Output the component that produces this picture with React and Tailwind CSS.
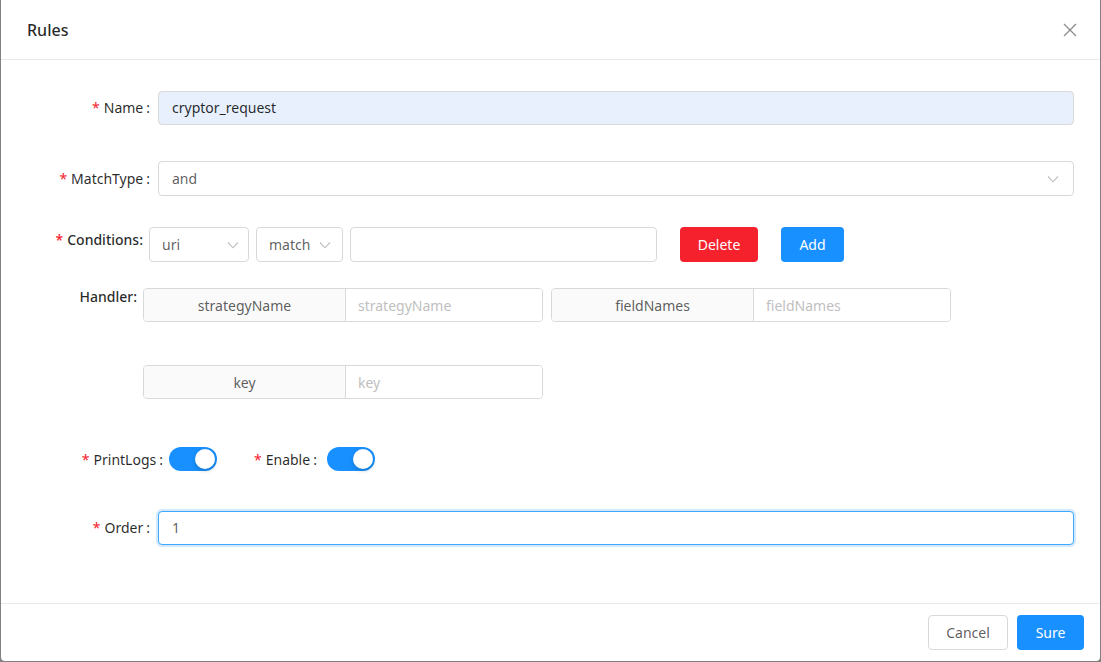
import React from "react";

const Chevron = ({ className = "" }) => (
  <svg width="12" height="12" viewBox="0 0 12 12" className={className} fill="none" stroke="#bfbfbf" strokeWidth="1.1">
    <polyline points="1,3.5 6,8.8 11,3.5" />
  </svg>
);

const Star = () => <span className="text-[#f5222d] mr-[4px] text-[14px]">*</span>;

const Label = ({ children, colon = true }) => (
  <div className="w-[150px] shrink-0 flex items-center justify-end text-[14px] text-[rgba(0,0,0,0.85)]">
    <Star />
    <span>{children}</span>
    {colon && <span className="ml-[3px] mr-[1px]">:</span>}
  </div>
);

const Switch = () => (
  <div className="w-[48px] h-[24px] rounded-full bg-[#1890ff] flex items-center justify-end pr-[2px]">
    <div className="w-[20px] h-[20px] rounded-full bg-white shadow-[0_2px_4px_rgba(0,35,11,0.2)]" />
  </div>
);

const AddonGroup = ({ name }) => (
  <div className="flex h-[34px] w-[400px] border border-[#d9d9d9] rounded-[4px] overflow-hidden text-[14px]">
    <div className="w-[202px] bg-[#fafafa] border-r border-[#d9d9d9] flex items-center justify-center text-[rgba(0,0,0,0.65)]">
      {name}
    </div>
    <div className="flex-1 flex items-center pl-[12px] text-[#bfbfbf] bg-white">{name}</div>
  </div>
);

export default function App() {
  return (
    <div
      className="w-[1101px] h-[662px] bg-[#808080] overflow-hidden"
      style={{ fontFamily: '"Noto Sans", "Noto Sans CJK SC", sans-serif' }}
    >
      <div className="ml-[1px] w-[1099px] h-[661px] bg-white rounded-b-[4px] flex flex-col">
        {/* header */}
        <div className="h-[60px] shrink-0 border-b border-[#e8e8e8] flex items-center justify-between pl-[26px] pr-[23px]">
          <div className="text-[16px] font-medium text-[rgba(0,0,0,0.85)]">Rules</div>
          <svg width="14" height="14" viewBox="0 0 14 14" stroke="#8c8c8c" strokeWidth="1.3">
            <line x1="1" y1="1" x2="13" y2="13" />
            <line x1="13" y1="1" x2="1" y2="13" />
          </svg>
        </div>

        {/* body */}
        <div className="flex-1 flex flex-col pt-[30px]">
          {/* Name */}
          <div className="flex items-center h-[35px] gap-[7px]">
            <Label>Name</Label>
            <div className="w-[916px] h-[34px] rounded-[4px] border border-[#d9d9d9] bg-[#e8f0fe] flex items-center pl-[13px] text-[14px] text-[rgba(0,0,0,0.85)]">
              cryptor_request
            </div>
          </div>

          {/* MatchType */}
          <div className="flex items-center h-[35px] gap-[7px] mt-[36px]">
            <Label>MatchType</Label>
            <div className="w-[916px] h-[35px] rounded-[4px] border border-[#d9d9d9] bg-white flex items-center justify-between pl-[13px] pr-[14px] text-[14px] text-[rgba(0,0,0,0.65)]">
              <span>and</span>
              <Chevron />
            </div>
          </div>

          {/* Conditions */}
          <div className="flex items-start mt-[31px] h-[35px]">
            <div className="w-[142px] shrink-0 flex justify-end pt-[2px] text-[14px] font-medium text-[rgba(0,0,0,0.85)]">
              <span className="text-[#f5222d] mr-[4px]">*</span>
              <span>Conditions:</span>
            </div>
            <div className="flex items-center ml-[6px] gap-[7px]">
              <div className="w-[100px] h-[35px] rounded-[4px] border border-[#d9d9d9] flex items-center justify-between pl-[12px] pr-[9px] text-[14px] text-[rgba(0,0,0,0.65)]">
                <span>uri</span>
                <Chevron />
              </div>
              <div className="w-[87px] h-[35px] rounded-[4px] border border-[#d9d9d9] flex items-center justify-between pl-[12px] pr-[11px] text-[14px] text-[rgba(0,0,0,0.65)]">
                <span>match</span>
                <Chevron />
              </div>
              <div className="w-[307px] h-[35px] rounded-[4px] border border-[#d9d9d9] bg-white" />
              <div className="ml-[16px] w-[78px] h-[35px] rounded-[4px] bg-[#f5222d] text-white text-[14px] flex items-center justify-center">
                Delete
              </div>
              <div className="ml-[16px] w-[63px] h-[35px] rounded-[4px] bg-[#1890ff] text-white text-[14px] flex items-center justify-center">
                Add
              </div>
            </div>
          </div>

          {/* Handler */}
          <div className="flex items-start mt-[26px]">
            <div className="w-[136px] shrink-0 flex justify-end text-[14px] font-medium text-[rgba(0,0,0,0.85)] leading-[16px] pt-[1px]">
              Handler:
            </div>
            <div className="ml-[6px] flex flex-col gap-[43px]">
              <div className="flex gap-[8px]">
                <AddonGroup name="strategyName" />
                <AddonGroup name="fieldNames" />
              </div>
              <div className="flex gap-[8px]">
                <AddonGroup name="key" />
              </div>
            </div>
          </div>

          {/* switches */}
          <div className="flex items-center mt-[48px] h-[24px]">
            <div className="w-[162px] shrink-0 flex items-center justify-end text-[14px] text-[rgba(0,0,0,0.85)]">
              <Star />
              <span>PrintLogs</span>
              <span className="ml-[3px]">:</span>
            </div>
            <div className="ml-[6px]">
              <Switch />
            </div>
            <div className="ml-[37px] flex items-center text-[14px] text-[rgba(0,0,0,0.85)]">
              <Star />
              <span>Enable</span>
              <span className="ml-[3px]">:</span>
            </div>
            <div className="ml-[10px]">
              <Switch />
            </div>
          </div>

          {/* Order */}
          <div className="flex items-center h-[35px] gap-[7px] mt-[39px]">
            <Label>Order</Label>
            <div className="w-[916px] h-[34px] rounded-[4px] border border-[#40a9ff] shadow-[0_0_0_2px_rgba(24,144,255,0.2)] bg-white flex items-center pl-[13px] text-[14px] text-[rgba(0,0,0,0.65)]">
              1
            </div>
          </div>
        </div>

        {/* footer */}
        <div className="h-[58px] shrink-0 border-t border-[#e8e8e8] flex items-center justify-end gap-[9px] pr-[16px]">
          <div className="w-[80px] h-[35px] rounded-[4px] border border-[#d9d9d9] text-[14px] text-[rgba(0,0,0,0.65)] flex items-center justify-center">
            Cancel
          </div>
          <div className="w-[67px] h-[35px] rounded-[4px] bg-[#1890ff] text-white text-[14px] flex items-center justify-center">
            Sure
          </div>
        </div>
      </div>
    </div>
  );
}
